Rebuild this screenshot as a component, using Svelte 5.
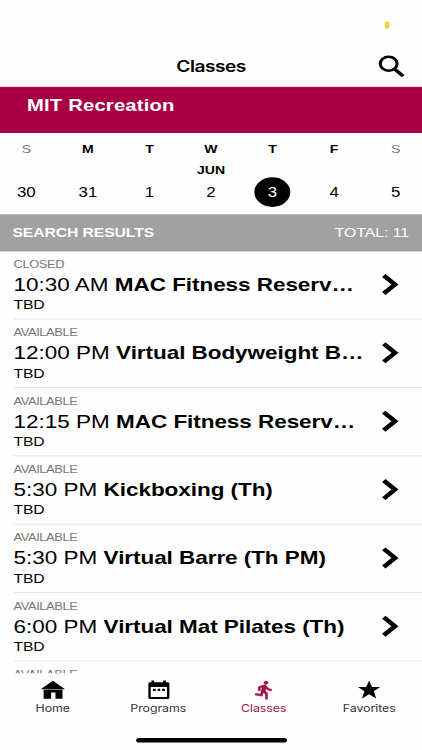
<script>
  const days = [
    { label: 'S', date: 30, weekend: true },
    { label: 'M', date: 31 },
    { label: 'T', date: 1 },
    { label: 'W', date: 2, month: 'JUN' },
    { label: 'T', date: 3 },
    { label: 'F', date: 4 },
    { label: 'S', date: 5, weekend: true },
  ];

  const classes = [
    { status: 'CLOSED', time: '10:30 AM', name: 'MAC Fitness Reserv…', place: 'TBD' },
    { status: 'AVAILABLE', time: '12:00 PM', name: 'Virtual Bodyweight B…', place: 'TBD' },
    { status: 'AVAILABLE', time: '12:15 PM', name: 'MAC Fitness Reserv…', place: 'TBD' },
    { status: 'AVAILABLE', time: '5:30 PM', name: 'Kickboxing (Th)', place: 'TBD' },
    { status: 'AVAILABLE', time: '5:30 PM', name: 'Virtual Barre (Th PM)', place: 'TBD' },
    { status: 'AVAILABLE', time: '6:00 PM', name: 'Virtual Mat Pilates (Th)', place: 'TBD' },
    { status: 'AVAILABLE', time: '', name: '', place: '' },
  ];

  const tabs = [
    { label: 'Home', icon: 'M12 1 23.8 11.2H.2zM3 11.800h18.300v10.700h-6.800v-7.500h-4.200v7.500H3z' },
    { label: 'Programs', icon: 'M5 .8h2.600V3h8.800V.8H19V3h1.700a1.700 1.700 0 0 1 1.700 1.700v16.400a1.700 1.700 0 0 1-1.700 1.700H3.700A1.700 1.700 0 0 1 2 21.100V4.700A1.700 1.700 0 0 1 3.700 3H5zM4.300 8.500v11.800h15.800V8.500zM6.600 10.700h2.500v2.500H6.600zm4.400 0h2.500v2.500H11zm4.400 0h2.500v2.500h-2.500z' },
    { label: 'Classes', icon: 'M13.490 5.480c1.100 0 2-.9 2-2s-.9-2-2-2-2 .9-2 2 .9 2 2 2zm-3.600 13.900 1-4.400 2.100 2v6h2v-7.500l-2.100-2 .6-3c1.300 1.500 3.300 2.500 5.500 2.500v-2c-1.900 0-3.500-1-4.300-2.400l-1-1.600c-.4-.6-1-1-1.700-1-.3 0-.5.100-.8.100l-5.200 2.200v4.700h2v-3.400l1.800-.7-1.600 8.100-4.900-1-.4 2z' },
    { label: 'Favorites', icon: 'M12 .8 14.900 8.600H22.800L16.600 13.600 18.900 22.200 12 17.200 5.100 22.200 7.400 13.600 1.200 8.600H9.100z' },
  ];

  let selectedDate = 3;
  let activeTab = 'Classes';
</script>

<div class="viewport">
  <div class="screen">
    <header class="navbar">
      <h1>Classes</h1>
      <span class="mic-dot"></span>
      <button class="search" aria-label="Search">
        <svg viewBox="0 0 26 26" width="26" height="26">
          <circle cx="10.400" cy="11" r="7.500" fill="none" stroke="#000" stroke-width="2.700" />
          <path d="M16 17 23.300 24.300" stroke="#000" stroke-width="3.400" />
        </svg>
      </button>
    </header>

    <div class="facility">MIT Recreation</div>

    <div class="week">
      {#each days as day}
        <button class="day" on:click={() => (selectedDate = day.date)}>
          <span class="letter" class:weekend={day.weekend}>{day.label}</span>
          <span class="month">{day.month ?? ''}</span>
          <span class="date" class:selected={day.date === selectedDate}>{day.date}</span>
        </button>
      {/each}
    </div>

    <div class="results">
      <strong>SEARCH RESULTS</strong>
      <span>TOTAL: 11</span>
    </div>

    <div class="list">
      {#each classes as item}
        <div class="row">
          <div class="info">
            <div class="status">{item.status}</div>
            <div class="title">{item.time} <b>{item.name}</b></div>
            <div class="place">{item.place}</div>
          </div>
          <svg class="chevron" viewBox="0 0 16 24" width="16" height="24">
            <path d="M2 2.200 12 12 2 21.800" fill="none" stroke="#000" stroke-width="4.400" />
          </svg>
        </div>
      {/each}
    </div>

    <nav class="tabs">
      {#each tabs as tab}
        <button class="tab" class:active={tab.label === activeTab} on:click={() => (activeTab = tab.label)}>
          <svg viewBox="0 0 24 24" width="22" height="22">
            <path d={tab.icon} fill="currentColor" fill-rule="evenodd" />
          </svg>
          <span>{tab.label}</span>
        </button>
      {/each}
    </nav>
    <div class="home-indicator"></div>
  </div>
</div>

<style>
  :global(body) {
    background: #fefefe;
  }

  .viewport {
    width: 422px;
    height: 750px;
    overflow: hidden;
  }

  /* 375x812 screen fitted to the frame */
  .screen {
    width: 375px;
    height: 812px;
    display: flex;
    flex-direction: column;
    transform: scale(1.12533, 0.92365);
    transform-origin: 0 0;
    background: #fefefe;
    color: #000;
    font-family: "Liberation Sans", Arial, sans-serif;
  }

  button {
    background: none;
    border: none;
    padding: 0;
    color: inherit;
    font-family: inherit;
  }

  .navbar {
    position: relative;
    flex: 0 0 94px;
    box-sizing: border-box;
    padding-top: 51px;
    text-align: center;
  }

  h1 {
    margin: 0;
    font-size: 17px;
    line-height: 43px;
    font-weight: 600;
    font-family: Inter, sans-serif;
    letter-spacing: -0.450px;
  }

  .mic-dot {
    position: absolute;
    right: 29px;
    top: 23px;
    width: 4px;
    height: 8px;
    border-radius: 2px;
    background: #eed52f;
  }

  .search {
    position: absolute;
    right: 14px;
    top: 58px;
    width: 26px;
    height: 26px;
  }

  .search svg {
    display: block;
  }

  .facility {
    flex: 0 0 50px;
    box-sizing: border-box;
    padding: 9px 24px 7px;
    background: #a80043;
    color: #fff;
    font-size: 18px;
    line-height: 22px;
    font-weight: bold;
    letter-spacing: 0.150px;
  }

  .week {
    flex: 0 0 87.500px;
    display: grid;
    grid-template-columns: repeat(7, 54.700px);
    justify-content: center;
  }

  .day {
    display: flex;
    flex-direction: column;
    align-items: center;
  }

  .letter, .month {
    font-size: 12.500px;
    font-weight: bold;
  }

  .letter {
    height: 18px;
    margin-top: 9px;
    line-height: 18px;
  }

  .letter.weekend {
    color: #777;
    font-weight: normal;
  }

  .month {
    height: 16px;
    margin-top: 4.500px;
    line-height: 16px;
  }

  .date {
    width: 32px;
    height: 32px;
    border-radius: 50%;
    font-size: 15px;
    line-height: 32px;
  }

  .date.selected {
    background: #000;
    color: #fff;
  }

  .results {
    flex: 0 0 40px;
    display: flex;
    align-items: center;
    justify-content: space-between;
    box-sizing: border-box;
    padding: 2px 11.500px 0 11px;
    border-bottom: 1px solid #999;
    background: #a1a1a1;
    color: #fff;
    font-size: 14px;
  }

  .results strong {
    letter-spacing: -0.100px;
  }

  .list {
    flex: 0 0 457.500px;
    overflow: hidden;
  }

  .row {
    display: flex;
    align-items: center;
    justify-content: space-between;
    height: 74px;
    box-sizing: border-box;
    margin-left: 12px;
    padding-right: 20px;
    border-bottom: 1px solid #e3e3e3;
  }

  .info {
    padding-top: 0.500px;
    white-space: nowrap;
  }

  .status {
    height: 17px;
    font-size: 11.500px;
    line-height: 17px;
    letter-spacing: -0.400px;
    color: #777;
  }

  .title {
    height: 26px;
    font-size: 20px;
    line-height: 26px;
  }

  .title b {
    letter-spacing: -0.050px;
  }

  .place {
    height: 18px;
    font-size: 14px;
    line-height: 18px;
    letter-spacing: -0.200px;
  }

  .chevron {
    flex: none;
  }

  .tabs {
    flex: 0 0 70px;
    display: grid;
    grid-template-columns: repeat(4, 1fr);
    align-items: start;
  }

  .tab {
    display: flex;
    flex-direction: column;
    align-items: center;
    padding-top: 7px;
    font-family: Inter, sans-serif;
    font-size: 11px;
    line-height: 16px;
  }

  .tab span {
    margin-top: 0.500px;
    letter-spacing: -0.050px;
    color: #333;
  }

  .tab.active, .tab.active span {
    color: #a01246;
  }

  .tab.active svg {
    margin-left: 2px;
  }

  .tab.active path {
    stroke: currentColor;
    stroke-width: 0.500;
  }

  .home-indicator {
    width: 134px;
    height: 5px;
    margin: 0 auto;
    border-radius: 3px;
    background: #000;
  }
</style>
